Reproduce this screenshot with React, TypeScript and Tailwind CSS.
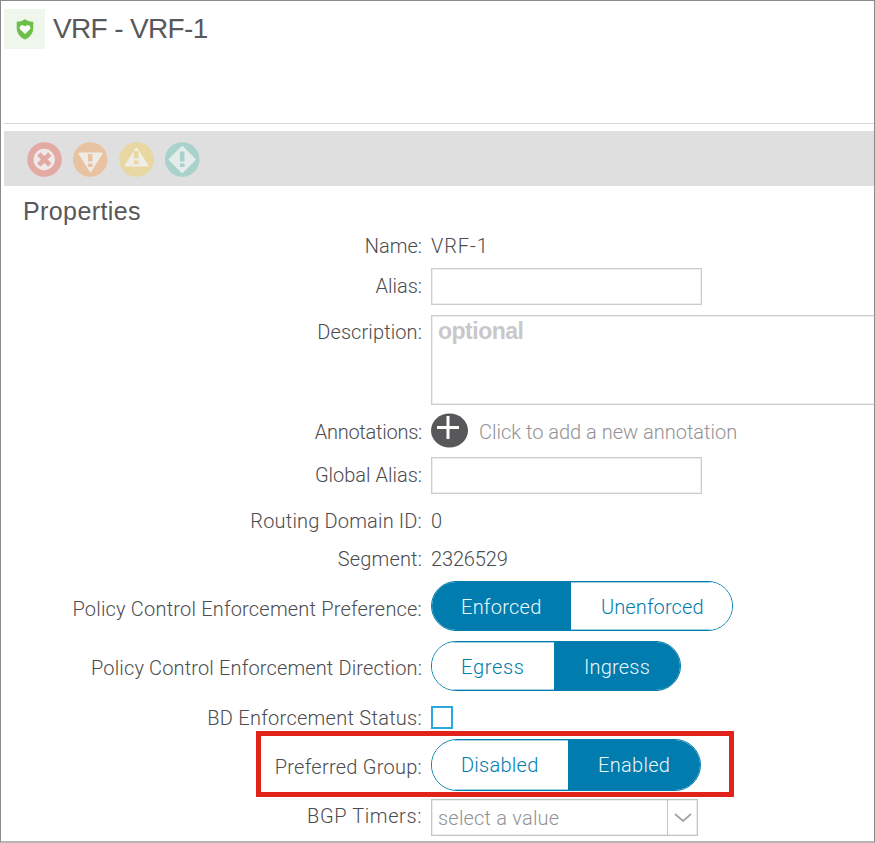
import type { ReactNode } from "react";

function Row({ label, rowClass, labelClass, labelText = "", children }: {
  label: string;
  rowClass: string;
  labelClass: string;
  labelText?: string;
  children: ReactNode;
}) {
  return (
    <div className={`flex items-start ${rowClass}`}>
      <div className={`w-[421px] shrink-0 whitespace-nowrap text-right ${labelClass}`}>
        <span className={labelText}>{label}</span>
      </div>
      <div className="ml-[9px] min-w-0 flex-1">{children}</div>
    </div>
  );
}

const on = "bg-[#007cae] text-[#eaf7fc]";
const off = "bg-white text-[#007cae] shadow-[inset_0_1px_0_#9fd0e3,inset_0_-1px_0_#9fd0e3]";

function Toggle({ size, items }: {
  size: string;
  items: { text: string; width: string; spacing: string; active: boolean }[];
}) {
  return (
    <div className={`flex overflow-hidden rounded-full border border-[#007cae] ${size}`}>
      {items.map((item) => (
        <button
          key={item.text}
          className={`flex items-center whitespace-nowrap ${item.width} ${item.active ? on : off}`}
        >
          <span className={item.spacing}>{item.text}</span>
        </button>
      ))}
    </div>
  );
}

function FaultIcons() {
  return (
    <div className="flex gap-[11px]">
      <svg width="35" height="35" viewBox="0 0 35 35">
        <circle cx="17.5" cy="17.5" r="17.3" fill="#e3aaa4" />
        <circle cx="17.2" cy="17.5" r="10.7" fill="#eeeae9" />
        <path d="M11.8 12l11 11m0-11l-11 11" stroke="#e3aaa4" strokeWidth="4.6" />
      </svg>
      <svg width="35" height="35" viewBox="0 0 35 35">
        <circle cx="17.2" cy="17.5" r="17.3" fill="#e9c2a1" />
        <path d="M6.5 11.5h22L17.5 29z" fill="#efebe7" stroke="#efebe7" strokeWidth="2" strokeLinejoin="round" />
        <path d="M17.2 12v7.5m0 2v3.5" stroke="#e9c2a1" strokeWidth="4.6" />
      </svg>
      <svg width="35" height="35" viewBox="0 0 35 35">
        <circle cx="17.5" cy="17.5" r="17.3" fill="#e8d7a0" />
        <path d="M6.5 23.5h22L17.5 6.5z" fill="#efede5" stroke="#efede5" strokeWidth="2" strokeLinejoin="round" />
        <path d="M17.2 9v7.5m0 2v3.5" stroke="#e8d7a0" strokeWidth="4.6" />
      </svg>
      <svg width="35" height="35" viewBox="0 0 35 35">
        <circle cx="17.2" cy="17.5" r="17.3" fill="#a8d2cb" />
        <path d="M17.2 5L29.7 17.5L17.2 30L4.7 17.5z" fill="#e5edeb" stroke="#e5edeb" strokeWidth="2" strokeLinejoin="round" />
        <path d="M17.2 9.5v10m0 2v3.5" stroke="#a8d2cb" strokeWidth="4.6" />
      </svg>
    </div>
  );
}

export default function App() {
  return (
    <div className="relative h-[843px] w-[875px] overflow-hidden border border-b-2 border-[#8b898d] border-b-[#b5b4b6] bg-white font-['Roboto',sans-serif] text-[20px] font-light leading-[24px] text-[#4c4c4e]">
      <header className="ml-[3px] h-[123px] border-b border-[#d8d8da] pt-[8px]">
        <div className="flex items-start">
          <div className="flex h-[40px] w-[41px] items-center justify-center bg-[#eff7ec]">
            <svg width="18" height="21" viewBox="0 0 18 21">
              <path d="M9 0.3C6.8 2 3.7 2.8 0.7 2.8V8.5C0.7 14.5 4.4 18.7 9 20.6C13.6 18.7 17.3 14.5 17.3 8.5V2.8C14.3 2.8 11.2 2 9 0.3z" fill="#6cc04a" />
              <path d="M9 14.9L4.4 10.6C2.8 8.8 3.9 6.2 6.2 6.2C7.6 6.2 8.5 6.8 9 7.6C9.5 6.8 10.4 6.2 11.8 6.2C14.1 6.2 15.2 8.8 13.6 10.6z" fill="#fff" />
            </svg>
          </div>
          <h1 className="ml-[8px] mt-[3px] whitespace-nowrap font-['Liberation_Sans',sans-serif] text-[28px] font-normal leading-[34px] tracking-[-0.65px] text-[#58585a]">VRF - VRF-1</h1>
        </div>
      </header>
      <div className="ml-[3px] mt-[7px] flex h-[55px] items-start bg-[#dfdfdf] pl-[23px] pt-[11px]">
        <FaultIcons />
      </div>
      <h2 className="ml-[22px] mt-[10px] h-[30px] font-['Liberation_Sans',sans-serif] text-[25px] font-normal leading-[30px] tracking-[0.4px] text-[#58585a]">Properties</h2>
      <section className="mt-[8px]">
        <Row label="Name:" rowClass="h-[34px]" labelClass=""><span className="tracking-[0.9px]">VRF-1</span></Row>
        <Row label="Alias:" rowClass="h-[47px]" labelClass="pt-[6px]">
          <div className="h-[37px] w-[271px] border border-[#cdcdd0] shadow-[inset_0_0_0_1px_#ededef]" />
        </Row>
        <Row label="Description:" rowClass="h-[98px]" labelClass="pt-[5px]" labelText="tracking-[0.1px]">
          <div className="h-[90px] border border-r-0 border-[#cdcdd0] pl-[6px] pt-[3px] shadow-[inset_1px_1px_0_#ededef,inset_0_-1px_0_#ededef] font-['Liberation_Sans',sans-serif] text-[23px] font-bold leading-[24px] text-[#c8c8ca]">
            <span className="tracking-[-0.5px]">optional</span>
          </div>
        </Row>
        <Row label="Annotations:" rowClass="h-[44px]" labelClass="pt-[7px]" labelText="tracking-[-0.25px]">
          <div className="flex items-start">
            <svg width="38" height="35" viewBox="0 0 38 35">
              <ellipse cx="18.5" cy="17.5" rx="18.5" ry="17" fill="#58585a" />
              <path d="M6 14.5h22M17 3v23" stroke="#fff" strokeWidth="3" />
            </svg>
            <span className="ml-[10px] mt-[7px] whitespace-nowrap text-[#929294]">Click to add a new annotation</span>
          </div>
        </Row>
        <Row label="Global Alias:" rowClass="h-[52px]" labelClass="pt-[6px]">
          <div className="h-[37px] w-[271px] border border-[#cdcdd0] shadow-[inset_0_0_0_1px_#ededef]" />
        </Row>
        <Row label="Routing Domain ID:" rowClass="h-[38px]" labelClass="" labelText="tracking-[0.17px]">0</Row>
        <Row label="Segment:" rowClass="h-[34px]" labelClass="" labelText="tracking-[0.15px]"><span className="tracking-[-0.15px]">2326529</span></Row>
        <Row label="Policy Control Enforcement Preference:" rowClass="h-[60px]" labelClass="pt-[16px]" labelText="tracking-[0.19px]">
          <Toggle size="h-[50px] w-[302px]" items={[
            { text: "Enforced", width: "w-[139px] pl-[29px] pt-[2px]", spacing: "tracking-[0.25px]", active: true },
            { text: "Unenforced", width: "flex-1 pl-[30px] pt-[2px]", spacing: "tracking-[0.1px]", active: false },
          ]} />
        </Row>
        <Row label="Policy Control Enforcement Direction:" rowClass="h-[65px]" labelClass="pt-[15px]" labelText="tracking-[0.14px]">
          <Toggle size="h-[50px] w-[250px]" items={[
            { text: "Egress", width: "w-[122px] pl-[29px] pt-[2px]", spacing: "tracking-[0.7px]", active: false },
            { text: "Ingress", width: "flex-1 pl-[30px] pt-[2px]", spacing: "tracking-[0.2px]", active: true },
          ]} />
        </Row>
        <Row label="BD Enforcement Status:" rowClass="h-[25px]" labelClass="" labelText="tracking-[0.27px]">
          <div className="h-[23px] w-[22px] border-2 border-[#2ba9df]" />
        </Row>
        <div className="ml-[255px] h-[66px] w-[478px] border-[5px] border-[#e2231a]">
          <div className="flex items-start pt-[3px]">
            <div className="w-[161px] shrink-0 whitespace-nowrap pt-[16px] text-right">
              <span className="tracking-[0.25px]">Preferred Group:</span>
            </div>
            <div className="ml-[9px]">
              <Toggle size="h-[52px] w-[270px]" items={[
                { text: "Disabled", width: "w-[136px] pl-[29px]", spacing: "tracking-[0.25px]", active: false },
                { text: "Enabled", width: "flex-1 pl-[30px]", spacing: "tracking-[0.3px]", active: true },
              ]} />
            </div>
          </div>
        </div>
        <Row label="BGP Timers:" rowClass="mt-[2px] h-[38px]" labelClass="pt-[5px]" labelText="tracking-[0.6px]">
          <div className="flex h-[37px] w-[267px] border border-[#c4c4c7] shadow-[inset_0_0_0_1px_#ededef]">
            <div className="flex-1 pl-[6px] pt-[6px] text-[#929294]"><span className="tracking-[0.2px]">select a value</span></div>
            <div className="flex w-[30px] items-center justify-center border-l border-[#c4c4c7]">
              <svg width="18" height="10" viewBox="0 0 18 10">
                <path d="M1 1l8 7 8-7" fill="none" stroke="#a5a5a8" strokeWidth="1.8" />
              </svg>
            </div>
          </div>
        </Row>
      </section>
    </div>
  );
}
